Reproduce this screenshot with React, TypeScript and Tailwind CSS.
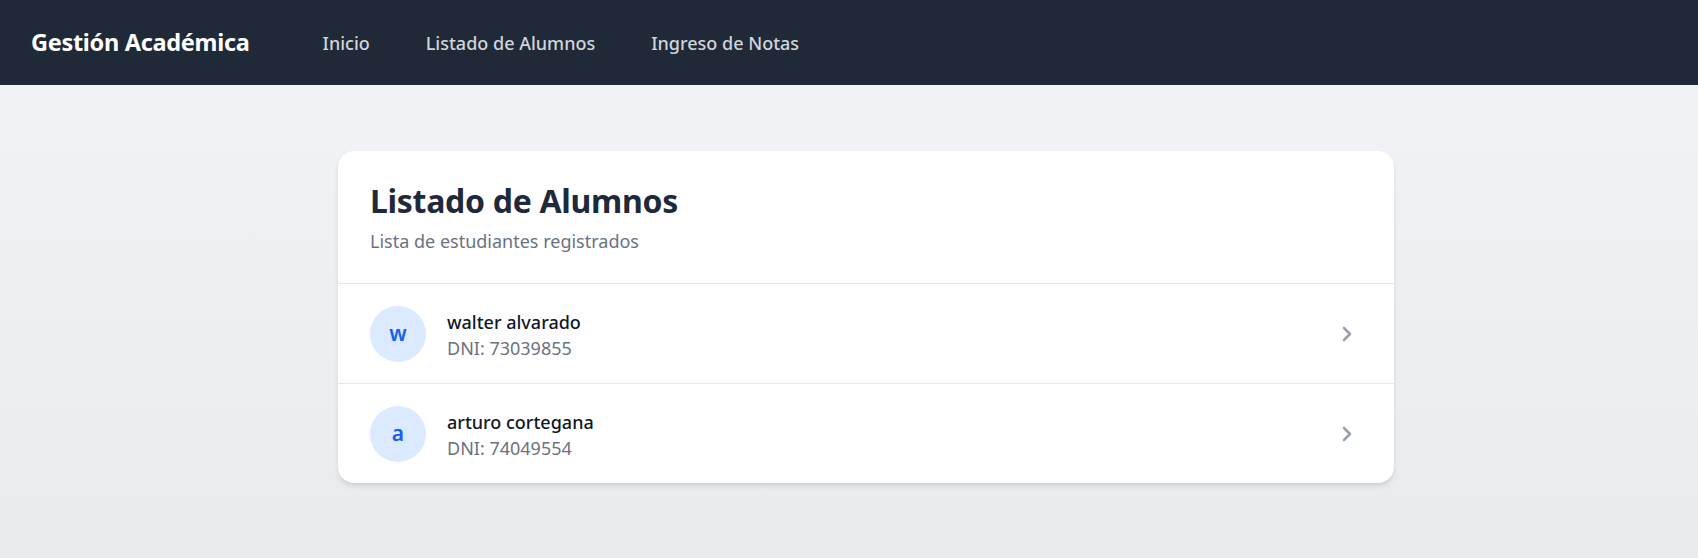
import React from "react";

type Alumno = {
  id: number;
  nombre: string;
  dni: string;
};

const alumnos: Alumno[] = [
  { id: 1, nombre: "walter alvarado", dni: "73039855" },
  { id: 2, nombre: "arturo cortegana", dni: "74049554" },
];

const ChevronRight = () => (
  <svg viewBox="0 0 24 24" fill="none" stroke="currentColor" strokeWidth={2.6} className="size-6 text-gray-400">
    <path strokeLinecap="round" strokeLinejoin="round" d="m9 18 6-6-6-6" />
  </svg>
);

const Navbar = () => (
  <nav className="bg-[#1f2937] h-[85px] flex items-center pl-[31px]">
    <span className="text-white font-bold text-[23.5px] tracking-[-0.3px]">Gestión Académica</span>
    <ul className="flex items-center gap-[56px] ml-[73px]">
      <li className="text-gray-300 font-medium text-lg">Inicio</li>
      <li className="text-gray-300 font-medium text-lg">Listado de Alumnos</li>
      <li className="text-gray-300 font-medium text-lg">Ingreso de Notas</li>
    </ul>
  </nav>
);

export default function App() {
  return (
    <div
      className="min-h-screen bg-gradient-to-b from-[#f3f4f6] to-[#eaebef]"
      style={{ fontFamily: '"Noto Sans", "Open Sans", sans-serif' }}
    >
      <Navbar />

      <main className="pl-[34px] pt-[66px] pb-10">
        <div className="mx-auto max-w-[1056px] bg-white rounded-2xl shadow-md overflow-hidden">
          {/* Encabezado */}
          <div className="px-8 pt-8 pb-7 border-b border-gray-200">
            <h1 className="text-[32px] leading-9 font-bold text-gray-800 tracking-[-0.3px]">Listado de Alumnos</h1>
            <p className="mt-2 text-lg leading-7 text-gray-500">Lista de estudiantes registrados</p>
          </div>

          {/* Lista */}
          <ul className="divide-y divide-gray-200">
            {alumnos.map((a) => (
              <li key={a.id} className="flex items-center justify-between px-8 py-[21.5px] hover:bg-gray-50 cursor-pointer">
                <div className="flex items-center">
                  <div className="flex items-center justify-center w-14 h-14 rounded-full bg-blue-100">
                    <span className="text-blue-600 font-semibold text-[21px] leading-none">{a.nombre.charAt(0)}</span>
                  </div>
                  <div className="ml-[21px]">
                    <p className="text-lg leading-7 font-medium text-gray-900">{a.nombre}</p>
                    <p className="text-lg leading-6 text-gray-500">DNI: {a.dni}</p>
                  </div>
                </div>
                <div className="mr-[3px]">
                  <ChevronRight />
                </div>
              </li>
            ))}
          </ul>
        </div>
      </main>
    </div>
  );
}
